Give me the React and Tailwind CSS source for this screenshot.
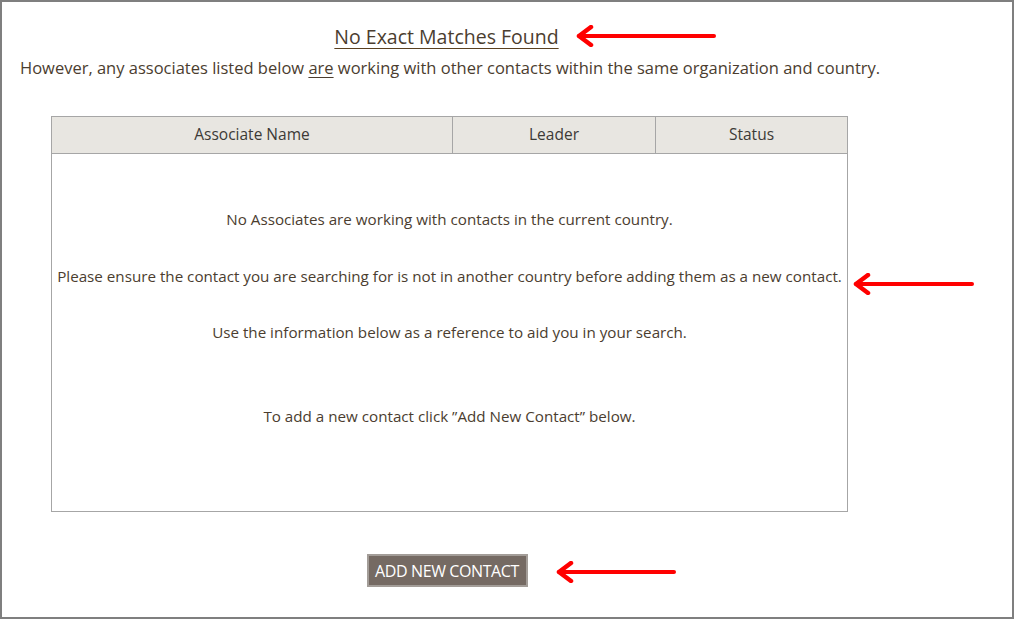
import React from 'react'

const font = { fontFamily: '"Open Sans", "Noto Sans", sans-serif' }

function Arrow({ className, width }) {
  return (
    <svg className={className} width={width} height="22" viewBox={`0 0 ${width} 22`} fill="none">
      <path d={`M${width - 2} 11 H4`} stroke="#ff0000" strokeWidth="4" strokeLinecap="round" />
      <path d="M16 2 L4 11 L16 20" stroke="#ff0000" strokeWidth="4.5" strokeLinecap="round" strokeLinejoin="round" />
    </svg>
  )
}

export default function App() {
  return (
    <div
      className="relative w-[1014px] h-[619px] border-2 border-[#7f7f7f] bg-white text-[#4b3d2f]"
      style={font}
    >
      <div className="w-[893px] flex flex-col items-center">
        {/* Heading */}
        <h1 className="mt-[21px] mr-[4px] text-[19.5px] leading-[28px] underline underline-offset-[4px] decoration-[#5a4020]">
          No Exact Matches Found
        </h1>
        <p className="self-start ml-[18px] mt-[6px] text-[16.5px] leading-[22px]">
          However, any associates listed below <span className="underline underline-offset-[3px]">are</span> working with other contacts within the same organization and country.
        </p>

        {/* Associates table */}
        <div className="mt-[37px] ml-[2px] w-[797px] border border-[#a6a6a6] text-[15.5px] text-[#3c3a36]">
          <div className="flex h-[37px] bg-[#e8e6e1] border-b border-[#a6a6a6]">
            <div className="w-[401px] flex items-center justify-center border-r border-[#a6a6a6]">Associate Name</div>
            <div className="w-[203px] flex items-center justify-center border-r border-[#a6a6a6]">Leader</div>
            <div className="flex-1 flex items-center justify-center">Status</div>
          </div>
          <div className="h-[357px] flex flex-col items-center text-[#4b3d2f] text-[15.2px] leading-[20px]">
            <p className="mt-[55px]">No Associates are working with contacts in the current country.</p>
            <p className="mt-[37px]">Please ensure the contact you are searching for is not in another country before adding them as a new contact.</p>
            <p className="mt-[36px]">Use the information below as a reference to aid you in your search.</p>
            <p className="mt-[64px]">To add a new contact click ”Add New Contact” below.</p>
          </div>
        </div>

        {/* Action */}
        <button className="mt-[42px] mr-[3px] w-[161px] h-[33px] bg-[#756a63] border-2 border-[#a39d98] text-white text-[16px] tracking-[-0.4px]">
          ADD NEW CONTACT
        </button>
      </div>

      {/* Annotation arrows */}
      <Arrow className="absolute left-[573px] top-[23px]" width={141} />
      <Arrow className="absolute left-[850px] top-[271px]" width={122} />
      <Arrow className="absolute left-[553px] top-[559px]" width={121} />
    </div>
  )
}
